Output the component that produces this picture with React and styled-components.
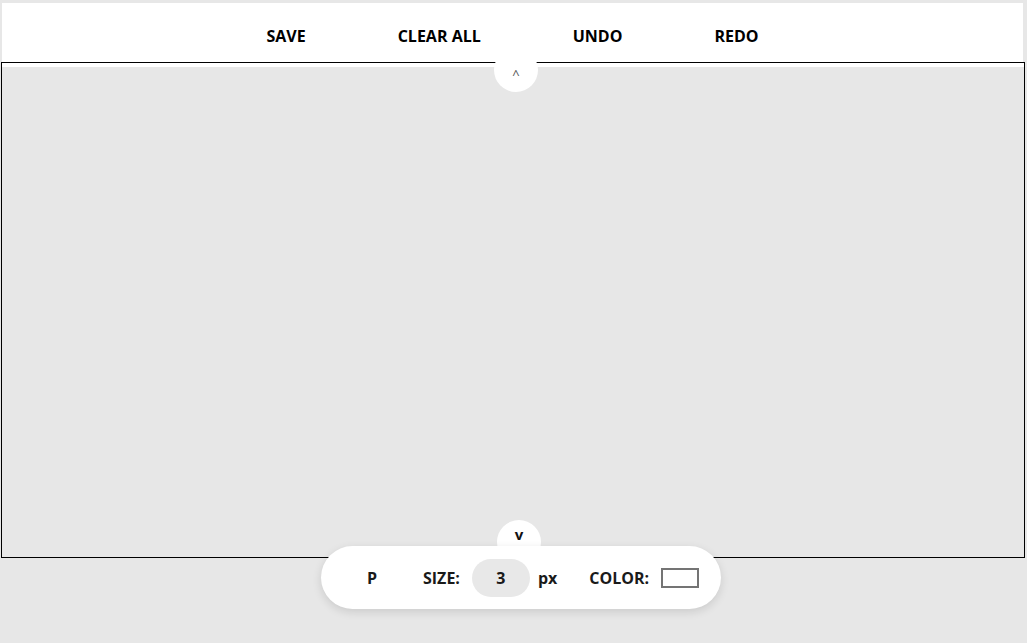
import styled, { createGlobalStyle } from "styled-components";

const GlobalStyle = createGlobalStyle`
  html, body {
    margin: 0;
    padding: 0;
    background: #e7e7e7;
    font-family: "Open Sans", "Liberation Sans", sans-serif;
  }
`;

const Stage = styled.div`
  position: relative;
  width: 100%;
  height: 643px;
  overflow: hidden;
`;

const TopBar = styled.div`
  display: flex;
  align-items: center;
  justify-content: center;
  height: 59px;
  box-sizing: border-box;
  padding-top: 6px;
  margin: 3px 4px 0 2px;
  background: #fff;
`;

const MenuButton = styled.button`
  border: none;
  background: none;
  padding: 0 46px;
  font-family: inherit;
  font-size: 16px;
  font-weight: 700;
  color: #000;
  cursor: pointer;
`;

const Canvas = styled.div`
  height: 494px;
  margin: 0 2px 0 1px;
  border: 1px solid #000;
  background: #e7e7e7;
  box-shadow: inset 0 4px 0 #fff;
`;

const Toggle = styled.div`
  width: 44px;
  height: 44px;
  border-radius: 50%;
  background: #fff;
  display: flex;
  justify-content: center;
  box-sizing: border-box;
  color: ${(p) => (p.$muted ? "#555" : "#111")};
  font-size: ${(p) => (p.$muted ? "13px" : "15px")};
  font-weight: ${(p) => (p.$muted ? 400 : 700)};
  padding-top: ${(p) => (p.$muted ? "20px" : "7px")};
  line-height: 1;
`;

const TopToggle = styled(Toggle)`
  position: absolute;
  top: 48px;
  left: 50%;
  transform: translateX(-50%);
  margin-left: 2.5px;
`;

const Dock = styled.div`
  position: absolute;
  top: 520px;
  left: 50%;
  transform: translateX(-50%);
  margin-left: 7.5px;
  display: flex;
  flex-direction: column;
  align-items: center;
`;

const DockToggle = styled(Toggle)`
  margin-right: 4px;
`;

const Pill = styled.div`
  position: relative;
  margin-top: -18px;
  display: flex;
  align-items: center;
  width: 400px;
  height: 63px;
  box-sizing: border-box;
  padding-left: 23px;
  border-radius: 32px;
  background: #fff;
  box-shadow: 0 3px 10px rgba(0, 0, 0, 0.12);
  font-size: 16px;
  font-weight: 700;
  color: #1a1a1a;
`;

const ToolButton = styled.div`
  width: 56px;
  text-align: center;
  margin-right: 23px;
`;

const Label = styled.span`
  margin-right: ${(p) => p.$gap || 0}px;
`;

const SizeInput = styled.div`
  width: 58px;
  height: 38px;
  border-radius: 19px;
  background: #e8e8e8;
  display: flex;
  align-items: center;
  justify-content: center;
  margin-right: 8px;
`;

const Unit = styled.span`
  margin-right: 32px;
`;

const Swatch = styled.div`
  width: 38px;
  height: 20px;
  box-sizing: border-box;
  border: 2px solid #747474;
  background: #fff;
`;

export default function App() {
  return (
    <>
      <GlobalStyle />
      <Stage>
        <TopBar>
          <MenuButton>SAVE</MenuButton>
          <MenuButton>CLEAR ALL</MenuButton>
          <MenuButton>UNDO</MenuButton>
          <MenuButton>REDO</MenuButton>
        </TopBar>
        <Canvas />
        <TopToggle $muted>^</TopToggle>
        <Dock>
          <DockToggle>v</DockToggle>
          <Pill>
            <ToolButton>P</ToolButton>
            <Label $gap={12}>SIZE:</Label>
            <SizeInput>3</SizeInput>
            <Unit>px</Unit>
            <Label $gap={12}>COLOR:</Label>
            <Swatch />
          </Pill>
        </Dock>
      </Stage>
    </>
  );
}
